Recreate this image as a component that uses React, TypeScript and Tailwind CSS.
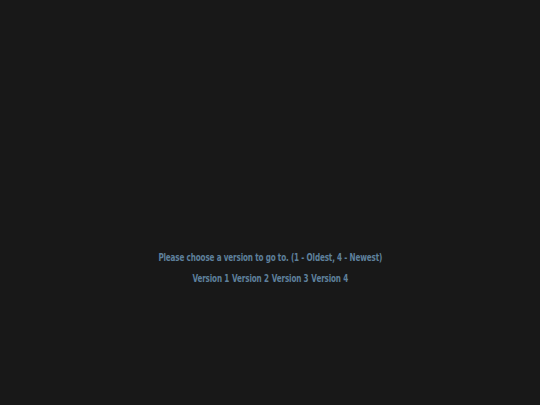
import React from 'react';

export default function App() {
  const versions = [1, 2, 3, 4];
  return (
    <div className="w-[540px] h-[405px] bg-[#181818] flex flex-col items-center pt-[250px] font-['DejaVu_Sans_Condensed','DejaVu_Sans',sans-serif] font-bold text-[#5e809c] text-[11px] tracking-[-0.2px]">
      <div className="flex flex-col items-center scale-x-[0.73]">
        <p className="leading-[15px] whitespace-nowrap">Please choose a version to go to. (1 - Oldest, 4 - Newest)</p>
        <div className="flex gap-[4px] mt-[6px] leading-[15px] whitespace-nowrap">
          {versions.map((v) => (
            <a key={v} href="#">Version {v}</a>
          ))}
        </div>
      </div>
    </div>
  );
}
